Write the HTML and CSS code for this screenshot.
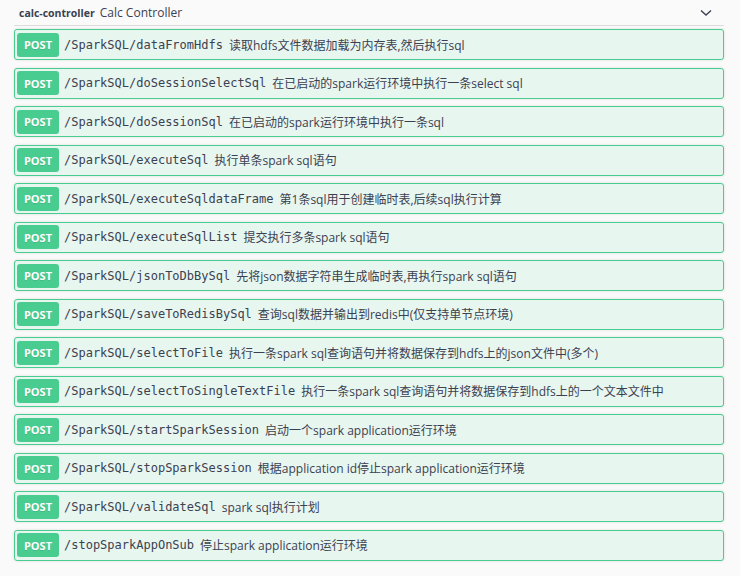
FILE: index.html
```html
<!DOCTYPE html>
<html lang="zh">
<head>
<meta charset="utf-8">
<title>calc-controller</title>
<link rel="stylesheet" href="styles.css">
</head>
<body>
<div class="wrap">
  <div class="tag-header">
    <span class="tag-name">calc-controller</span>
    <span class="tag-desc">Calc Controller</span>
    <svg class="chevron" width="12" height="8" viewBox="0 0 12 8"><path d="M1 1.5 L6 6 L11 1.5" fill="none" stroke="#3b4151" stroke-width="1.4"/></svg>
  </div>
  <div class="ops">
    <div class="op"><span class="method">POST</span><span class="path">/SparkSQL/dataFromHdfs</span><span class="summary">读取hdfs文件数据加载为内存表,然后执行sql</span></div>
    <div class="op"><span class="method">POST</span><span class="path">/SparkSQL/doSessionSelectSql</span><span class="summary">在已启动的spark运行环境中执行一条select sql</span></div>
    <div class="op"><span class="method">POST</span><span class="path">/SparkSQL/doSessionSql</span><span class="summary">在已启动的spark运行环境中执行一条sql</span></div>
    <div class="op"><span class="method">POST</span><span class="path">/SparkSQL/executeSql</span><span class="summary">执行单条spark sql语句</span></div>
    <div class="op"><span class="method">POST</span><span class="path">/SparkSQL/executeSqldataFrame</span><span class="summary">第1条sql用于创建临时表,后续sql执行计算</span></div>
    <div class="op"><span class="method">POST</span><span class="path">/SparkSQL/executeSqlList</span><span class="summary">提交执行多条spark sql语句</span></div>
    <div class="op"><span class="method">POST</span><span class="path">/SparkSQL/jsonToDbBySql</span><span class="summary">先将json数据字符串生成临时表,再执行spark sql语句</span></div>
    <div class="op"><span class="method">POST</span><span class="path">/SparkSQL/saveToRedisBySql</span><span class="summary">查询sql数据并输出到redis中(仅支持单节点环境)</span></div>
    <div class="op"><span class="method">POST</span><span class="path">/SparkSQL/selectToFile</span><span class="summary">执行一条spark sql查询语句并将数据保存到hdfs上的json文件中(多个)</span></div>
    <div class="op"><span class="method">POST</span><span class="path">/SparkSQL/selectToSingleTextFile</span><span class="summary">执行一条spark sql查询语句并将数据保存到hdfs上的一个文本文件中</span></div>
    <div class="op"><span class="method">POST</span><span class="path">/SparkSQL/startSparkSession</span><span class="summary">启动一个spark application运行环境</span></div>
    <div class="op"><span class="method">POST</span><span class="path">/SparkSQL/stopSparkSession</span><span class="summary">根据application id停止spark application运行环境</span></div>
    <div class="op"><span class="method">POST</span><span class="path">/SparkSQL/validateSql</span><span class="summary">spark sql执行计划</span></div>
    <div class="op"><span class="method">POST</span><span class="path">/stopSparkAppOnSub</span><span class="summary">停止spark application运行环境</span></div>
  </div>
</div>
</body>
</html>
```
FILE: styles.css
```css
html, body {
  margin: 0;
  padding: 0;
  background: #fafafa;
}
body {
  font-family: "Open Sans", "Noto Sans CJK SC", sans-serif;
  color: #3b4151;
}
.wrap {
  padding: 0 16px 0 14px;
}
.tag-header {
  display: flex;
  align-items: center;
  height: 25px;
  padding: 0 12px 0 5px;
  border-bottom: 1px solid #dcdcdd;
}
.tag-name {
  font-size: 10.5px;
  font-weight: 700;
}
.tag-desc {
  font-size: 12px;
  margin-left: 5px;
  flex: 1;
}
.chevron {
  display: block;
}
.ops {
  padding-top: 3px;
}
.op {
  display: flex;
  align-items: center;
  box-sizing: border-box;
  height: 31px;
  padding: 0 2px;
  margin-bottom: 7.54px;
  border: 1px solid #49cc90;
  border-radius: 3px;
  background: #e8f6f0;
  box-shadow: 0 0 3px rgba(0, 0, 0, 0.12);
}
.method {
  display: flex;
  align-items: center;
  justify-content: center;
  width: 42px;
  height: 24px;
  border-radius: 3px;
  background: #49cc90;
  color: #fff;
  font-size: 11px;
  font-weight: 700;
  text-shadow: 0 1px 0 rgba(0, 0, 0, 0.1);
}
.path {
  margin-left: 5px;
  font-family: "DejaVu Sans Mono", monospace;
  font-size: 12px;
  font-weight: 400;
}
.summary {
  margin-left: 6px;
  font-size: 12px;
}
```
